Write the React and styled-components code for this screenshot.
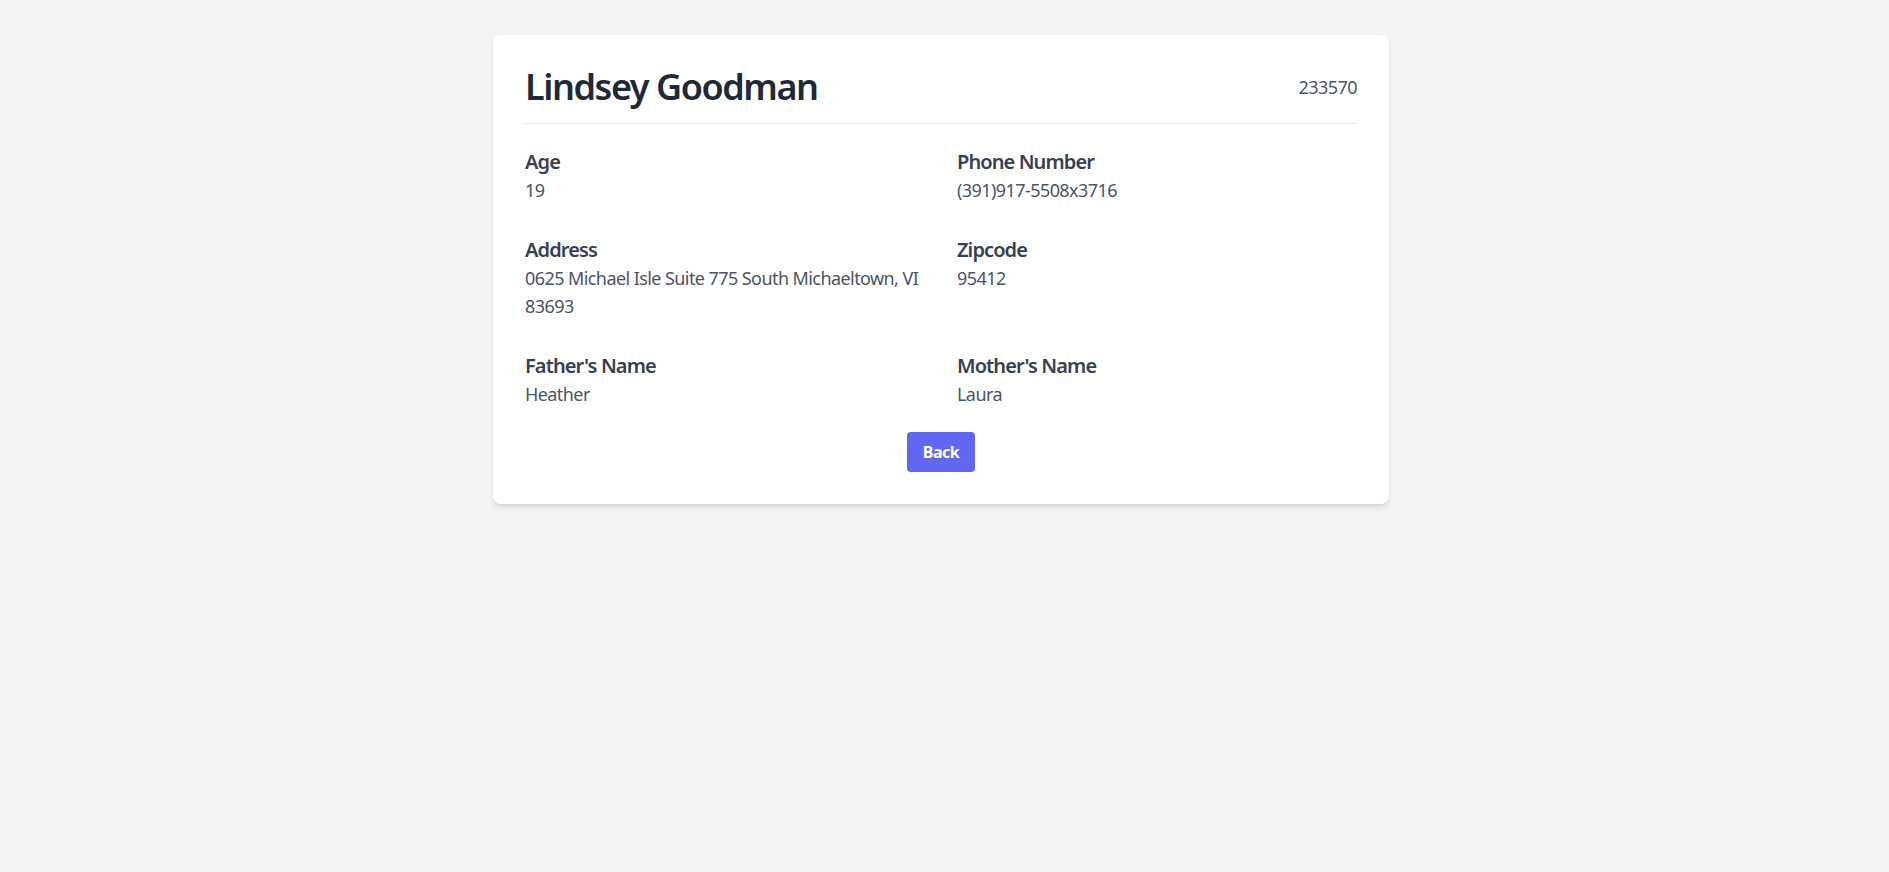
import React from 'react';
import styled, { createGlobalStyle } from 'styled-components';

const GlobalStyle = createGlobalStyle`
  * {
    box-sizing: border-box;
  }
  html, body {
    margin: 0;
    padding: 0;
    background: #f3f4f6;
    font-family: "Noto Sans", "Open Sans", sans-serif;
  }
`;

const person = {
  name: 'Lindsey Goodman',
  id: '233570',
  fields: [
    { label: 'Age', value: '19' },
    { label: 'Phone Number', value: '(391)917-5508x3716' },
    { label: 'Address', value: '0625 Michael Isle Suite 775 South Michaeltown, VI 83693' },
    { label: 'Zipcode', value: '95412' },
    { label: "Father's Name", value: 'Heather' },
    { label: "Mother's Name", value: 'Laura' }
  ]
};

const App = () => (
  <Page>
    <GlobalStyle />
    <Card>
      <CardHeader>
        <Name>{person.name}</Name>
        <PersonId>{person.id}</PersonId>
      </CardHeader>
      <DetailsGrid>
        {person.fields.map((field) => (
          <Detail key={field.label}>
            <DetailLabel>{field.label}</DetailLabel>
            <DetailValue>{field.value}</DetailValue>
          </Detail>
        ))}
      </DetailsGrid>
      <Actions>
        <BackButton type="button">Back</BackButton>
      </Actions>
    </Card>
  </Page>
);

export default App;

const Page = styled.div`
  min-height: 100vh;
  padding: 35px 23px 32px 16px;
  background: #f3f4f6;
`;

const Card = styled.div`
  max-width: 896px;
  margin: 0 auto;
  padding: 32px;
  background: #ffffff;
  border-radius: 8px;
  box-shadow: 0 4px 6px -1px rgba(0, 0, 0, 0.1), 0 2px 4px -2px rgba(0, 0, 0, 0.1);
`;

const CardHeader = styled.div`
  display: flex;
  justify-content: space-between;
  align-items: center;
  padding-bottom: 16px;
  margin-bottom: 24px;
  border-bottom: 1px solid #e5e7eb;
`;

const Name = styled.h1`
  margin: 0;
  font-size: 36px;
  line-height: 40px;
  font-weight: 600;
  letter-spacing: -0.04em;
  color: #1f2937;
`;

const PersonId = styled.span`
  font-size: 18px;
  line-height: 28px;
  letter-spacing: -0.03em;
  color: #4b5563;
`;

const DetailsGrid = styled.div`
  display: grid;
  grid-template-columns: 1fr 1fr;
  gap: 32px;
`;

const Detail = styled.div`
  display: flex;
  flex-direction: column;
`;

const DetailLabel = styled.h3`
  margin: 0;
  font-size: 20px;
  line-height: 28px;
  font-weight: 600;
  letter-spacing: -0.045em;
  color: #374151;
`;

const DetailValue = styled.p`
  margin: 0;
  font-size: 18px;
  line-height: 28px;
  letter-spacing: -0.032em;
  color: #4b5563;
`;

const Actions = styled.div`
  display: flex;
  justify-content: center;
  margin-top: 24px;
`;

const BackButton = styled.button`
  border: none;
  border-radius: 4px;
  padding: 8px 16px;
  background: #6366f1;
  color: #ffffff;
  font-family: inherit;
  font-size: 16px;
  line-height: 24px;
  font-weight: 700;
  letter-spacing: -0.03em;
  cursor: pointer;
`;
